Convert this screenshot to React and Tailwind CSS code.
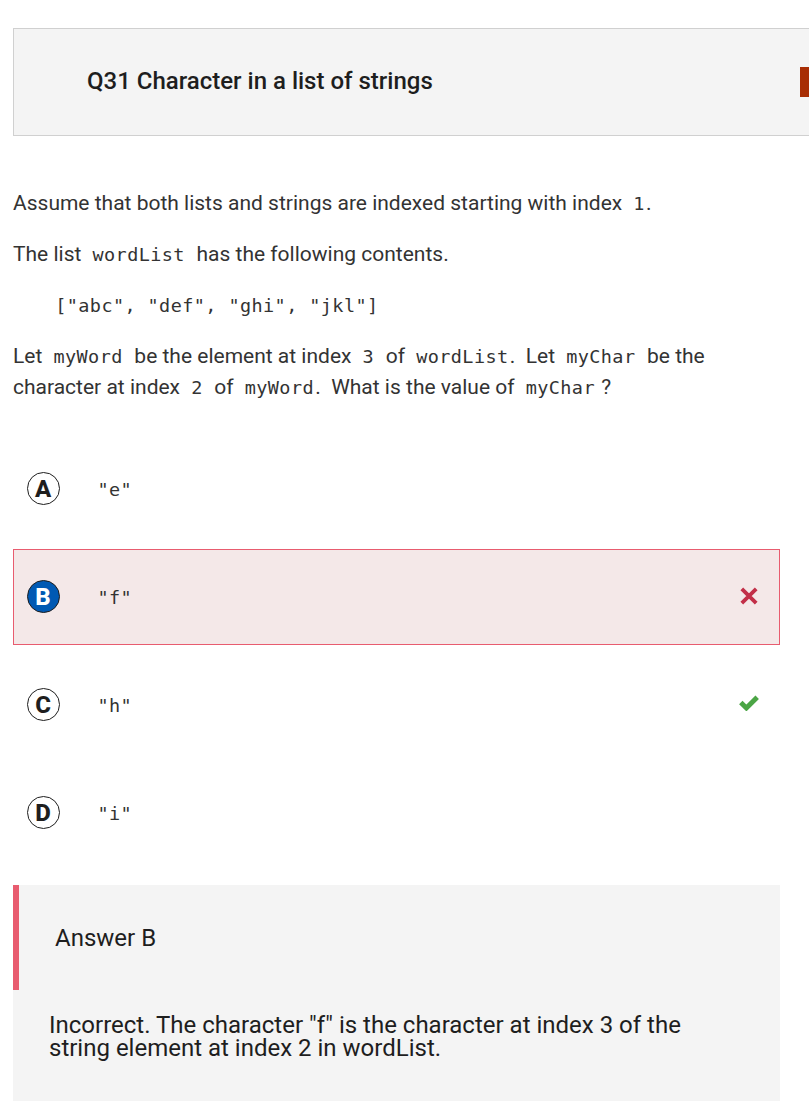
import React from "react";

const mono = "font-['DejaVu_Sans_Mono',monospace] text-[18.5px] leading-none tracking-[0.41px]";

const Code = ({ children }) => <code className={`mr-[1.2px] ml-[0.7px] ${mono}`}>{children}</code>;

const Badge = ({ letter, selected }) => (
  <span
    className={`mb-[2px] flex h-[33px] w-[33px] shrink-0 items-center justify-center rounded-full border border-[#1e1e1e] pt-[2px] pr-px text-[24px] leading-none font-extrabold ${
      selected ? "bg-[#0059b3] text-white" : "bg-white text-[#1e1e1e]"
    }`}
  >
    {letter}
  </span>
);

const Cross = () => (
  <svg width="18" height="18" viewBox="0 0 18 18" className="mr-[21px] mb-[2px]">
    <path d="M1.8 1.8L16.2 16.2M16.2 1.8L1.8 16.2" stroke="#c22f48" strokeWidth="3.8" fill="none" />
  </svg>
);

const Check = () => (
  <svg width="20" height="16" viewBox="0 0 20 16" className="mr-[20px] mb-[4px]">
    <path d="M1.8 7.6L7.4 13L18.2 2.2" stroke="#4ba545" strokeWidth="4.9" fill="none" />
  </svg>
);

const options = [
  { letter: "A", text: '"e"' },
  { letter: "B", text: '"f"', state: "wrong" },
  { letter: "C", text: '"h"', state: "right" },
  { letter: "D", text: '"i"' },
];

export default function App() {
  return (
    <div className="h-[1101px] w-full overflow-hidden bg-white pt-7 pl-[13px] font-[Roboto,sans-serif] text-[#1e1e1e]">
      <header className="flex h-[108px] items-center justify-between border border-r-0 border-[#d0d0d0] bg-[#f4f4f4] pl-[73px]">
        <h1 className="pb-[2px] text-[24px] leading-7 font-medium">Q31 Character in a list of strings</h1>
        <span className="h-[30px] w-[9px] bg-[#a82e04]" />
      </header>

      <main className="w-[767px]">
        <section className="flex h-[305px] flex-col gap-5 pt-[52px] text-[21px] leading-[31px] text-[#333] whitespace-pre">
          <p>Assume that both lists and strings are indexed starting with index{"  "}<Code>1</Code>.</p>
          <p>The list{"  "}<Code>wordList</Code>{"  "}has the following contents.</p>
          <p className="pl-[41.5px]"><Code>["abc", "def", "ghi", "jkl"]</Code></p>
          <p>
            Let{"  "}<Code>myWord</Code>{"  "}be the element at index{"  "}<Code>3</Code>{"  "}of{"  "}<Code>wordList</Code>.{"  "}Let{"  "}<Code>myChar</Code>{"  "}be the
            <br />
            character at index{"  "}<Code>2</Code>{"  "}of{"  "}<Code>myWord</Code>.{"  "}What is the value of{"  "}<Code>myChar</Code> ?
          </p>
        </section>

        <ul className="flex flex-col gap-3">
          {options.map((o) => (
            <li
              key={o.letter}
              className={`flex h-24 items-center border pl-[13px] ${
                o.state === "wrong" ? "border-[#e85c6f] bg-[#f4e8e8]" : "border-transparent"
              }`}
            >
              <Badge letter={o.letter} selected={o.state === "wrong"} />
              <code className={`ml-[37.4px] grow pt-[3px] text-[#333] ${mono}`}>{o.text}</code>
              {o.state === "wrong" && <Cross />}
              {o.state === "right" && <Check />}
            </li>
          ))}
        </ul>

        <section className="mt-6 h-[216px] bg-[#f4f4f4]">
          <h2 className="flex h-[105px] items-center border-l-[6px] border-[#e85c6f] pl-[36px] text-[24px]">Answer B</h2>
          <p className="pt-6 pl-9 text-[24px] leading-[23px] whitespace-nowrap">
            Incorrect. The character "f" is the character at index 3 of the
            <br />
            string element at index 2 in wordList.
          </p>
        </section>
      </main>
    </div>
  );
}
